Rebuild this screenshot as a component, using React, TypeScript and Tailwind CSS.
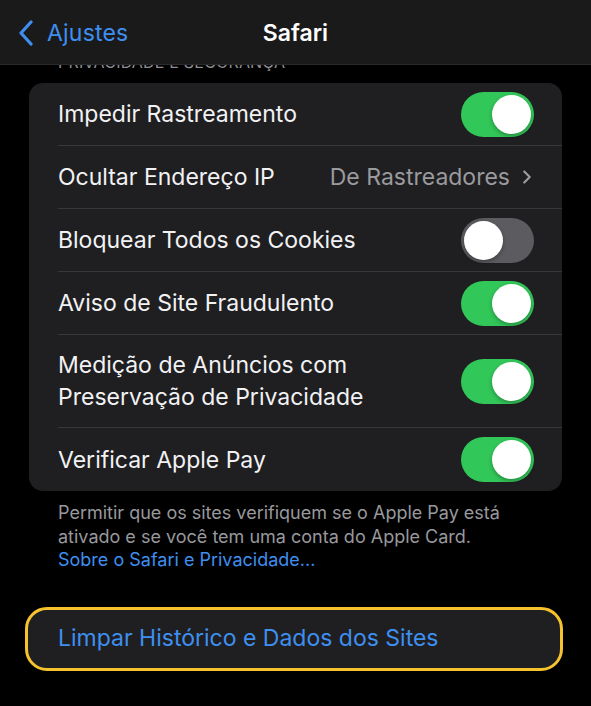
import { ChevronRight } from 'lucide-react';

type Row = { label: string[]; toggle?: boolean; value?: string };

const rows: Row[] = [
  { label: ['Impedir Rastreamento'], toggle: true },
  { label: ['Ocultar Endereço IP'], value: 'De Rastreadores' },
  { label: ['Bloquear Todos os Cookies'], toggle: false },
  { label: ['Aviso de Site Fraudulento'], toggle: true },
  { label: ['Medição de Anúncios com', 'Preservação de Privacidade'], toggle: true },
  { label: ['Verificar Apple Pay'], toggle: true },
];

function Toggle({ on }: { on: boolean }) {
  return (
    <div
      className={`w-[73px] h-[45px] rounded-full p-[3px] flex shrink-0 ${
        on ? 'bg-[#32c759] justify-end' : 'bg-[#5b5b60] justify-start'
      }`}
    >
      <div className="w-[39px] h-[39px] rounded-full bg-white shadow-[0_2px_4px_rgba(0,0,0,0.3)]" />
    </div>
  );
}

export default function App() {
  return (
    <div className="relative w-[591px] h-[706px] bg-black overflow-hidden font-['Inter',sans-serif] antialiased">
      {/* Nav bar overlays the scrolled content */}
      <div className="absolute top-0 left-0 right-0 h-[65px] bg-[#1a1a1b] border-b border-[#2a2a2c] z-10 flex items-center">
        <div className="flex items-center pl-[17px] pt-[2px] text-[#3e8ff0]">
          <svg width="18" height="26" viewBox="0 0 18 26" fill="none" className="mr-[12px]">
            <path d="M14 2 L4 13 L14 24" stroke="currentColor" strokeWidth="3.2" strokeLinecap="round" strokeLinejoin="round" />
          </svg>
          <span className="text-[23px] leading-none tracking-[0.2px]">Ajustes</span>
        </div>
        <span className="absolute left-0 right-0 pt-[2px] text-center text-white text-[23px] font-semibold leading-none pointer-events-none">
          Safari
        </span>
      </div>

      <div className="pt-[50px]">
        <p className="pl-[58px] text-[16px] leading-[24px] text-[#8d8d92] uppercase tracking-[0.2px]">
          Privacidade e Segurança
        </p>

        <div className="mx-[29px] mt-[9px] w-[533px] bg-[#1f1f21] rounded-[14px] overflow-hidden">
          {rows.map((row, i) => (
            <div key={i} className="pl-[29px]">
              <div
                className={`flex items-center justify-between pr-[28px] ${
                  row.label.length > 1 ? 'h-[93px]' : 'h-[63px]'
                } ${i < rows.length - 1 ? 'border-b border-[#38383b]' : ''}`}
              >
                <div className="text-[23px] leading-[32px] text-[#f2f2f4]">
                  {row.label.map(l => (
                    <div key={l}>{l}</div>
                  ))}
                </div>
                {row.toggle !== undefined && <Toggle on={row.toggle} />}
                {row.value && (
                  <div className="flex items-center gap-[6px] text-[#9a9a9f] -mr-[4px]">
                    <span className="text-[23px] leading-none">{row.value}</span>
                    <ChevronRight size={22} strokeWidth={2.4} />
                  </div>
                )}
              </div>
            </div>
          ))}
        </div>

        <div className="pl-[58px] pr-[56px] pt-[10px] text-[18px] leading-[23.5px] text-[#98989d]">
          <p>Permitir que os sites verifiquem se o Apple Pay está ativado e se você tem uma conta do Apple Card.</p>
          <p className="text-[#3e8ff0]">Sobre o Safari e Privacidade...</p>
        </div>

        <div className="mx-[25px] mt-[35px] w-[538px] h-[64px] rounded-[22px] border-[3px] border-[#f6c22e] bg-[#1f1f21] flex items-center pl-[30px]">
          <span className="text-[23px] text-[#3e8ff0] leading-none">Limpar Histórico e Dados dos Sites</span>
        </div>
      </div>
    </div>
  );
}
